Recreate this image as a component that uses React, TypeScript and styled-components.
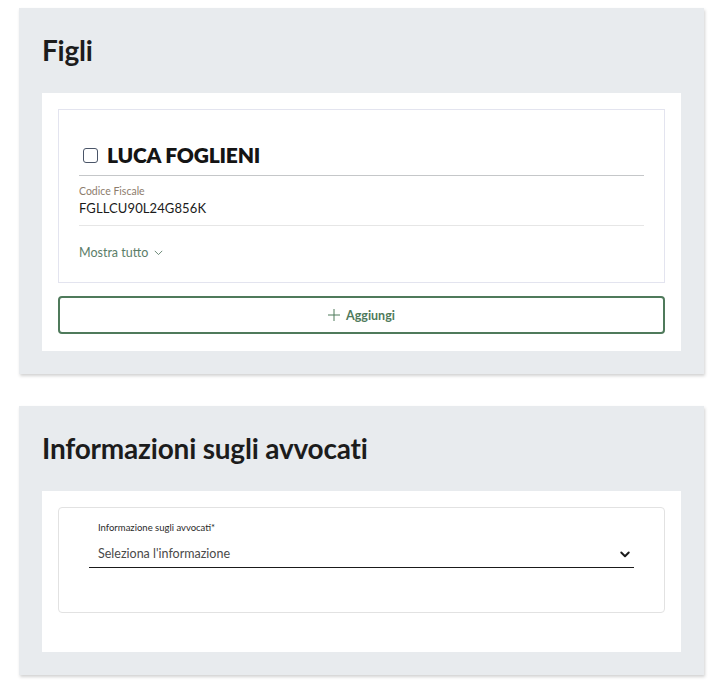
import styled, { createGlobalStyle } from 'styled-components';

const GlobalStyle = createGlobalStyle`
  body {
    margin: 0;
    background: #ffffff;
    font-family: 'Lato', 'Noto Sans', sans-serif;
    color: #1a1a1a;
  }
`;

const Page = styled.div`
  padding: 8px 15px 20px 19px;
  display: flex;
  flex-direction: column;
  gap: 32px;
`;

const Section = styled.section`
  background: #e8ebee;
  padding: 0 23px 23px;
  box-shadow: 1px 2px 3px rgba(0, 0, 0, 0.18);
`;

const SectionTitle = styled.h2`
  margin: 0;
  height: 85px;
  display: flex;
  align-items: center;
  padding-bottom: 2px;
  box-sizing: border-box;
  font-size: 28px;
  font-weight: 700;
  letter-spacing: -0.2px;
  color: #1c1c1c;
`;

const Panel = styled.div<{ $bottom: number }>`
  background: #ffffff;
  padding: 16px 16px ${(p) => p.$bottom}px;
  display: flex;
  flex-direction: column;
  gap: 13px;
`;

const Card = styled.div<{ $radius?: number; $border: string }>`
  border: 1px solid ${(p) => p.$border};
  border-radius: ${(p) => p.$radius ?? 0}px;
`;

const PersonCard = styled(Card)`
  padding: 28px 20px 22px;
`;

const PersonHeader = styled.div`
  display: flex;
  align-items: center;
  gap: 9px;
  height: 38px;
  box-sizing: border-box;
  padding: 0 0 4px 4px;
  border-bottom: 1px solid #c5c7c9;
`;

const CheckBox = styled.span`
  width: 13px;
  height: 13px;
  border: 1.5px solid #4a5568;
  border-radius: 3px;
  display: inline-block;
  margin-top: 1px;
`;

const PersonName = styled.span`
  font-size: 21px;
  font-weight: 800;
  letter-spacing: -0.2px;
  color: #141414;
`;

const Field = styled.div`
  padding: 9px 0 9px;
  border-bottom: 1px solid #e6e6e6;
  display: flex;
  flex-direction: column;
  gap: 3px;
`;

const FieldLabel = styled.span`
  font-size: 10.5px;
  color: #8d7c6c;
`;

const FieldValue = styled.span`
  font-size: 13px;
  color: #1a1a1a;
  letter-spacing: 0.1px;
`;

const ShowAll = styled.button`
  margin-top: 19px;
  padding: 0;
  border: none;
  background: none;
  font-family: inherit;
  font-size: 12.5px;
  color: #5b7d68;
  display: flex;
  align-items: center;
  gap: 5px;
  cursor: pointer;
`;

const AddButton = styled.button`
  height: 38px;
  border: 2px solid #4f7a5b;
  border-radius: 4px;
  background: #ffffff;
  font-family: inherit;
  font-size: 12.5px;
  font-weight: 700;
  color: #4f7a5b;
  display: flex;
  align-items: center;
  justify-content: center;
  gap: 6px;
  cursor: pointer;
`;

const SelectCard = styled(Card)`
  height: 106px;
  box-sizing: border-box;
  padding: 14px 30px 0;
`;

const SelectLabel = styled.div`
  font-size: 9.5px;
  color: #2a2a2a;
  padding-left: 9px;
  margin-bottom: 13px;
`;

const SelectBox = styled.div`
  display: flex;
  align-items: center;
  justify-content: space-between;
  padding: 0 3px 6px 9px;
  border-bottom: 1px solid #1a1a1a;
  font-size: 12.5px;
  color: #4a4a4a;
`;

function Chevron({ size, color, width }: { size: number; color: string; width: number }) {
  return (
    <svg width={size} height={size} viewBox="0 0 16 16" fill="none">
      <path d="M3 6l5 5 5-5" stroke={color} strokeWidth={width} strokeLinecap="round" strokeLinejoin="round" />
    </svg>
  );
}

export default function App() {
  return (
    <>
      <GlobalStyle />
      <Page>
        <Section>
          <SectionTitle>Figli</SectionTitle>
          <Panel $bottom={17}>
            <PersonCard $border="#e3e4ef">
              <PersonHeader>
                <CheckBox />
                <PersonName>LUCA FOGLIENI</PersonName>
              </PersonHeader>
              <Field>
                <FieldLabel>Codice Fiscale</FieldLabel>
                <FieldValue>FGLLCU90L24G856K</FieldValue>
              </Field>
              <ShowAll>
                Mostra tutto
                <Chevron size={11} color="#5b7d68" width={1.3} />
              </ShowAll>
            </PersonCard>
            <AddButton>
              <svg width="12" height="12" viewBox="0 0 12 12">
                <path d="M6 0v12M0 6h12" stroke="#4f7a5b" strokeWidth="1" />
              </svg>
              Aggiungi
            </AddButton>
          </Panel>
        </Section>

        <Section>
          <SectionTitle>Informazioni sugli avvocati</SectionTitle>
          <Panel $bottom={39}>
            <SelectCard $border="#e2e2e2" $radius={4}>
              <SelectLabel>Informazione sugli avvocati*</SelectLabel>
              <SelectBox>
                <span>Seleziona l'informazione</span>
                <Chevron size={12} color="#1a1a1a" width={2.6} />
              </SelectBox>
            </SelectCard>
          </Panel>
        </Section>
      </Page>
    </>
  );
}
